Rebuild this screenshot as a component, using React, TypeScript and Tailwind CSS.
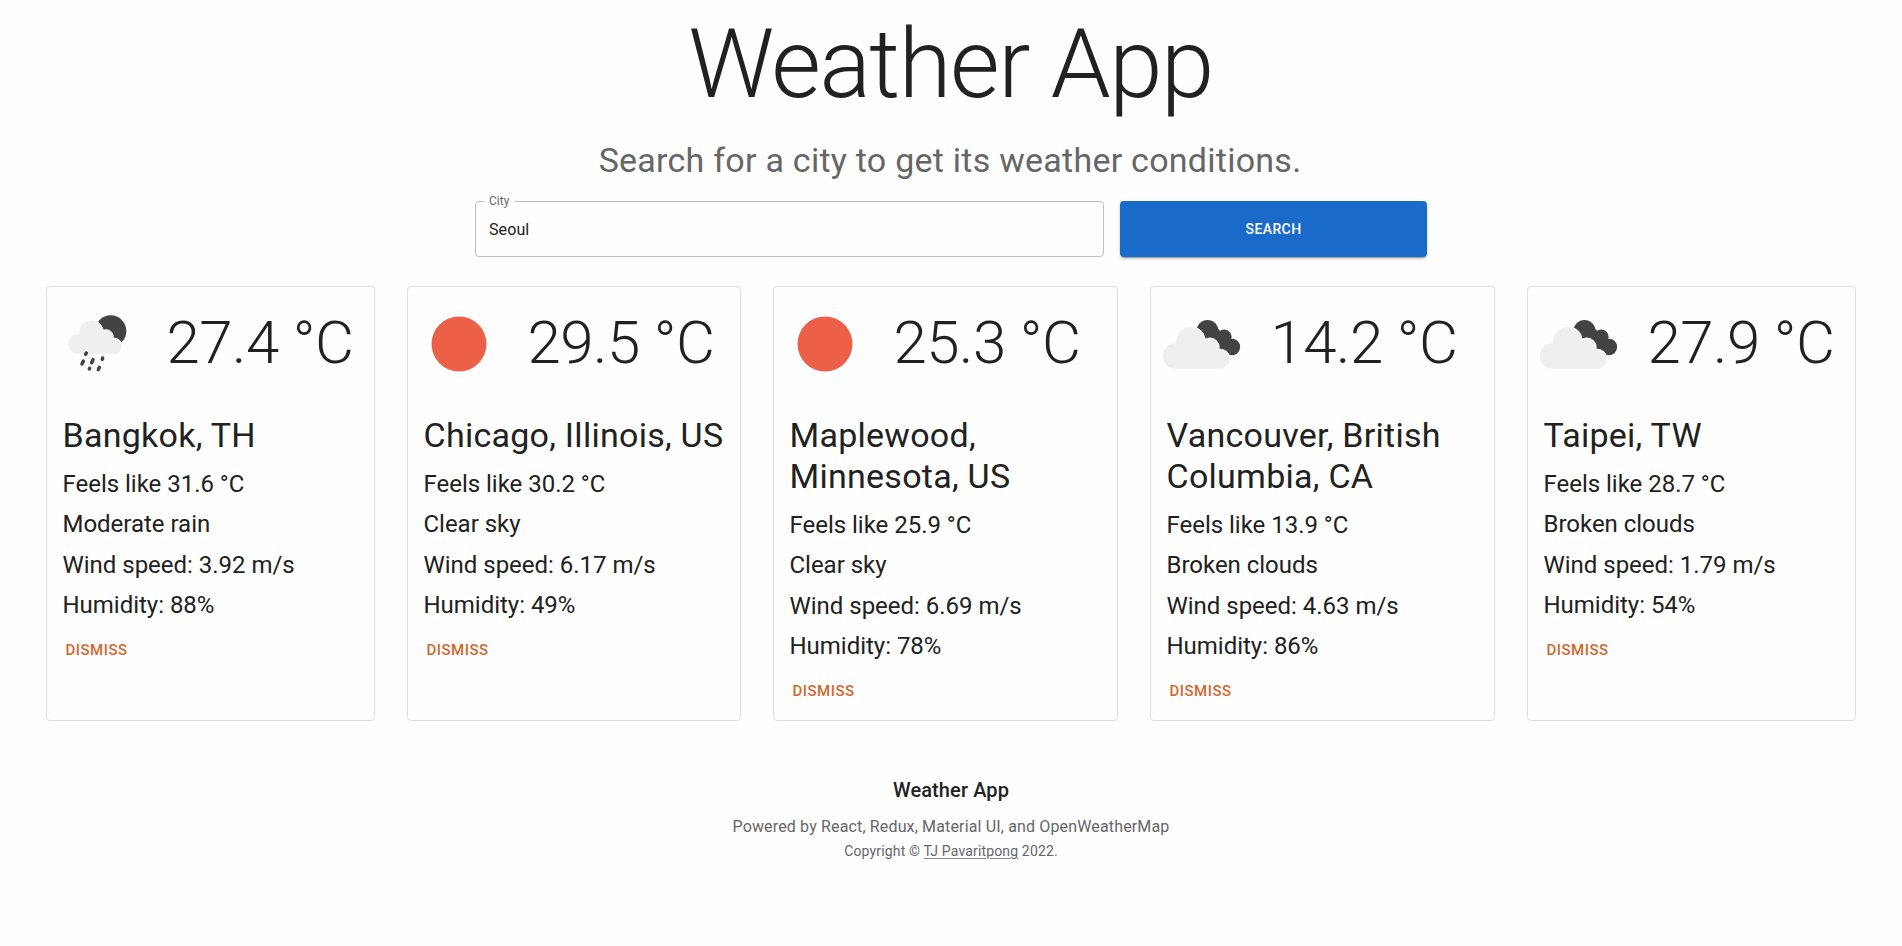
type IconName = "rain" | "clear" | "clouds";

interface City {
  icon: IconName;
  temp: string;
  name: string;
  feels: string;
  sky: string;
  wind: string;
  humidity: string;
}

const cities: City[] = [
  { icon: "rain", temp: "27.4", name: "Bangkok, TH", feels: "31.6", sky: "Moderate rain", wind: "3.92", humidity: "88" },
  { icon: "clear", temp: "29.5", name: "Chicago, Illinois, US", feels: "30.2", sky: "Clear sky", wind: "6.17", humidity: "49" },
  { icon: "clear", temp: "25.3", name: "Maplewood, Minnesota, US", feels: "25.9", sky: "Clear sky", wind: "6.69", humidity: "78" },
  { icon: "clouds", temp: "14.2", name: "Vancouver, British Columbia, CA", feels: "13.9", sky: "Broken clouds", wind: "4.63", humidity: "86" },
  { icon: "clouds", temp: "27.9", name: "Taipei, TW", feels: "28.7", sky: "Broken clouds", wind: "1.79", humidity: "54" },
];

function RainIcon() {
  return (
    <svg viewBox="24 40 300 300" className="size-[100px] shrink-0" aria-hidden="true">
      <circle cx="212" cy="151" r="47" fill="#434345" />
      <g fill="#efefef" stroke="#fefefe" strokeWidth="6" paintOrder="stroke">
        <circle cx="222" cy="197" r="22.5" />
        <circle cx="198" cy="170" r="21" />
        <circle cx="153" cy="155" r="35" />
      </g>
      <g fill="#efefef">
        <circle cx="114" cy="190" r="30" />
        <path d="M114 165h85l23 32v22.500H114z" />
        <circle cx="198" cy="170" r="21" />
        <circle cx="222" cy="197" r="22.500" />
        <circle cx="153" cy="155" r="35" />
      </g>
      <g stroke="#434345" strokeWidth="10.500" strokeLinecap="round">
        <path d="M139 217l-2 4M130 241l-4 9M159 237l-4 9M188 232l-1 4M149 263l-1 2M178 260l-3 7" />
      </g>
    </svg>
  );
}

function ClearIcon() {
  return (
    <svg viewBox="0 0 300 300" className="size-[100px] shrink-0" aria-hidden="true">
      <circle cx="150" cy="150" r="82.500" fill="#ec6047" />
    </svg>
  );
}

function CloudsIcon() {
  return (
    <svg viewBox="36.500 40 300 300" className="size-[100px] shrink-0" aria-hidden="true">
      <g fill="#434345">
        <circle cx="203" cy="151" r="33" />
        <circle cx="253" cy="169" r="22.500" />
        <circle cx="276" cy="199" r="25" />
        <path d="M180 170l50-28 26 20 10 62h-30z" />
      </g>
      <g fill="#efefef" stroke="#fefefe" strokeWidth="7" paintOrder="stroke">
        <circle cx="240" cy="236" r="28.500" />
        <circle cx="210" cy="200" r="26" />
        <circle cx="152" cy="182" r="42" />
      </g>
      <g fill="#efefef">
        <circle cx="107" cy="226" r="38" />
        <path d="M107 190h110l23 40v34H107z" />
        <circle cx="240" cy="236" r="28.500" />
        <circle cx="210" cy="200" r="26" />
        <circle cx="152" cy="182" r="42" />
      </g>
    </svg>
  );
}

const icons = { rain: RainIcon, clear: ClearIcon, clouds: CloudsIcon };

function WeatherCard({ city }: { city: City }) {
  const Icon = icons[city.icon];
  return (
    <article className="rounded border border-[#dedede]">
      <header className="mt-[7px] flex items-center pl-px">
        <Icon />
        <p className="ml-[18.500px] -mt-[2px] text-[60px] leading-[72px] font-light tracking-[-0.5px] whitespace-nowrap">{city.temp} °C</p>
      </header>
      <div className="mt-[20.500px] px-[15.500px]">
        <h2 className="text-[34px] leading-[41px] tracking-[0.26px]">{city.name}</h2>
        <div className="mt-3 flex flex-col gap-[8.600px] text-2xl leading-8 tracking-[-0.02px]">
          <p>Feels like {city.feels} °C</p>
          <p>{city.sky}</p>
          <p>Wind speed: {city.wind} m/s</p>
          <p>Humidity: {city.humidity}%</p>
        </div>
        <button className="mt-4 ml-[3px] block text-[15px] leading-[26px] font-medium tracking-[0.5px] text-[#d0692f] uppercase">Dismiss</button>
      </div>
    </article>
  );
}

export default function App() {
  return (
    <div className="flex min-h-screen flex-col items-center bg-[#fefefe] pt-2 font-['Roboto',sans-serif] text-[#212121]">
      <h1 className="mr-px text-8xl leading-[112px] font-light tracking-[-1.5px]">Weather App</h1>
      <p className="mt-[19px] mr-[2px] text-[34px] leading-[42px] tracking-[0.25px] text-[#666666]">Search for a city to get its weather conditions.</p>

      <form className="mt-5 flex h-14 w-[952px] gap-4" onSubmit={(e) => e.preventDefault()}>
        <div className="relative w-[629px]">
          <input
            id="city"
            defaultValue="Seoul"
            className="h-full w-full rounded border border-[#bebebe] bg-transparent px-[13px] text-base tracking-[0.1px] outline-none"
          />
          <label htmlFor="city" className="absolute -top-[8px] left-[9px] w-[31px] bg-[#fefefe] pl-[5px] text-xs leading-4 text-[#666666]">City</label>
        </div>
        <button className="flex-1 rounded bg-[#1a6bc9] text-sm font-medium tracking-[0.4px] text-white uppercase shadow-[0_3px_1px_-2px_rgba(0,0,0,0.2),0_2px_2px_0_rgba(0,0,0,0.14),0_1px_5px_0_rgba(0,0,0,0.12)]">
          Search
        </button>
      </form>

      <main className="mt-[29px] grid h-[435px] w-[1810px] grid-cols-[329px_334px_345px_345px_329px] gap-8">
        {cities.map((city) => (
          <WeatherCard key={city.name} city={city} />
        ))}
      </main>

      <footer className="mt-[53px] flex flex-col items-center">
        <p className="text-xl leading-8 font-medium tracking-[0.1px]">Weather App</p>
        <p className="mt-[9px] text-base leading-6 tracking-[0.15px] text-[#666666]">Powered by React, Redux, Material UI, and OpenWeatherMap</p>
        <p className="mt-[2px] text-sm leading-5 tracking-[0.15px] text-[#666666]">
          Copyright ©{" "}
          <a href="#" className="underline decoration-[#8a8a8a] underline-offset-[2px]">TJ Pavaritpong</a> 2022.
        </p>
      </footer>
    </div>
  );
}
